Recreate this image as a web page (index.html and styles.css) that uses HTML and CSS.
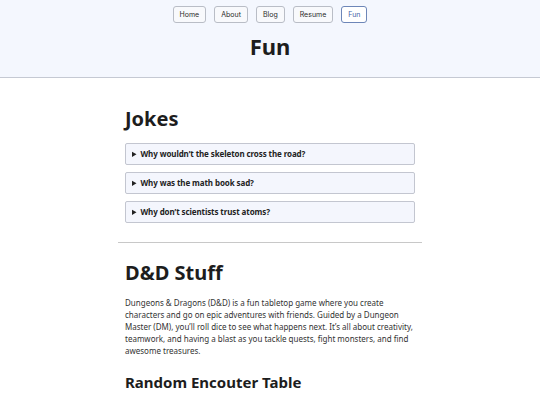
FILE: index.html
```html
<!doctype html>
<html lang="en">
  <head>
    <title>Fun</title>
    <meta charset="utf-8" />
    <link rel="stylesheet" href="styles.css">
  </head>

  <body>
    <header class="site-header">
      <nav class="nav">
        <a class="nav-button" href="#">Home</a>
        <a class="nav-button" href="#">About</a>
        <a class="nav-button" href="#">Blog</a>
        <a class="nav-button" href="#">Resume</a>
        <a class="nav-button active" href="#">Fun</a>
      </nav>
      <h1>Fun</h1>
    </header>

    <main class="content">
      <section class="section">
        <h2>Jokes</h2>
        <details class="joke">
          <summary>Why wouldn’t the skeleton cross the road?</summary>
          <p>He didn’t have the guts.</p>
        </details>
        <details class="joke">
          <summary>Why was the math book sad?</summary>
          <p>It had too many problems.</p>
        </details>
        <details class="joke">
          <summary>Why don’t scientists trust atoms?</summary>
          <p>Because they make up everything.</p>
        </details>
      </section>

      <hr class="divider" />

      <section class="section">
        <h2>D&amp;D Stuff</h2>
        <p>
          Dungeons &amp; Dragons (D&amp;D) is a fun tabletop game where you create
          characters and go on epic adventures with friends. Guided by a Dungeon
          Master (DM), you’ll roll dice to see what happens next. It’s all about
          creativity, teamwork, and having a blast as you tackle quests, fight
          monsters, and find awesome treasures.
        </p>
        <h3>Random Encouter Table</h3>
      </section>
    </main>
  </body>
</html>
```

FILE: styles.css
```css
body {
  font-family: "Noto Sans", sans-serif;
  margin: 0;
  color: #222;
  background-color: #fff;
  font-size: 8px;
  line-height: 1.5;
}

.site-header {
  background-color: #f4f7fe;
  border-bottom: 1px solid #c5c9d3;
  padding-top: 6px;
  height: 71px;
}

.nav {
  display: flex;
  justify-content: center;
  gap: 8px;
}

.nav-button {
  font-family: Inter, sans-serif;
  font-size: 7px;
  line-height: 15px;
  color: #2b2b2b;
  text-decoration: none;
  border: 1px solid #b9bdc6;
  border-radius: 3px;
  padding: 0 6px;
  background-color: #f8f9fc;
}

.nav-button.active {
  color: #3f62a6;
  border-color: #6d86b8;
  background-color: #fff;
}

.site-header h1 {
  text-align: center;
  font-size: 22px;
  line-height: 30px;
  margin: 8px 0 0;
  color: #1d1d1d;
}

.content {
  width: 304px;
  margin: 0 auto;
  padding-top: 27px;
}

.section {
  padding: 0 7px;
}

.section h2 {
  font-size: 20px;
  line-height: 27px;
  margin: 0 0 11px;
  color: #1d1d1d;
}

.joke {
  background-color: #f4f6fd;
  border: 1px solid #c3c6d0;
  border-radius: 2px;
  margin-bottom: 7px;
}

.joke summary {
  font-weight: bold;
  letter-spacing: -0.1px;
  padding: 4px 6px;
  cursor: pointer;
  color: #222;
}

.joke p {
  margin: 0;
  padding: 0 6px 5px;
}

.divider {
  border: 0;
  border-top: 1px solid #c8c8c8;
  margin: 19px 0 16px;
}

.section p {
  margin: 0 0 15px;
  color: #333;
}

.section h3 {
  font-size: 15px;
  line-height: 20px;
  margin: 0;
  color: #1d1d1d;
}
```
